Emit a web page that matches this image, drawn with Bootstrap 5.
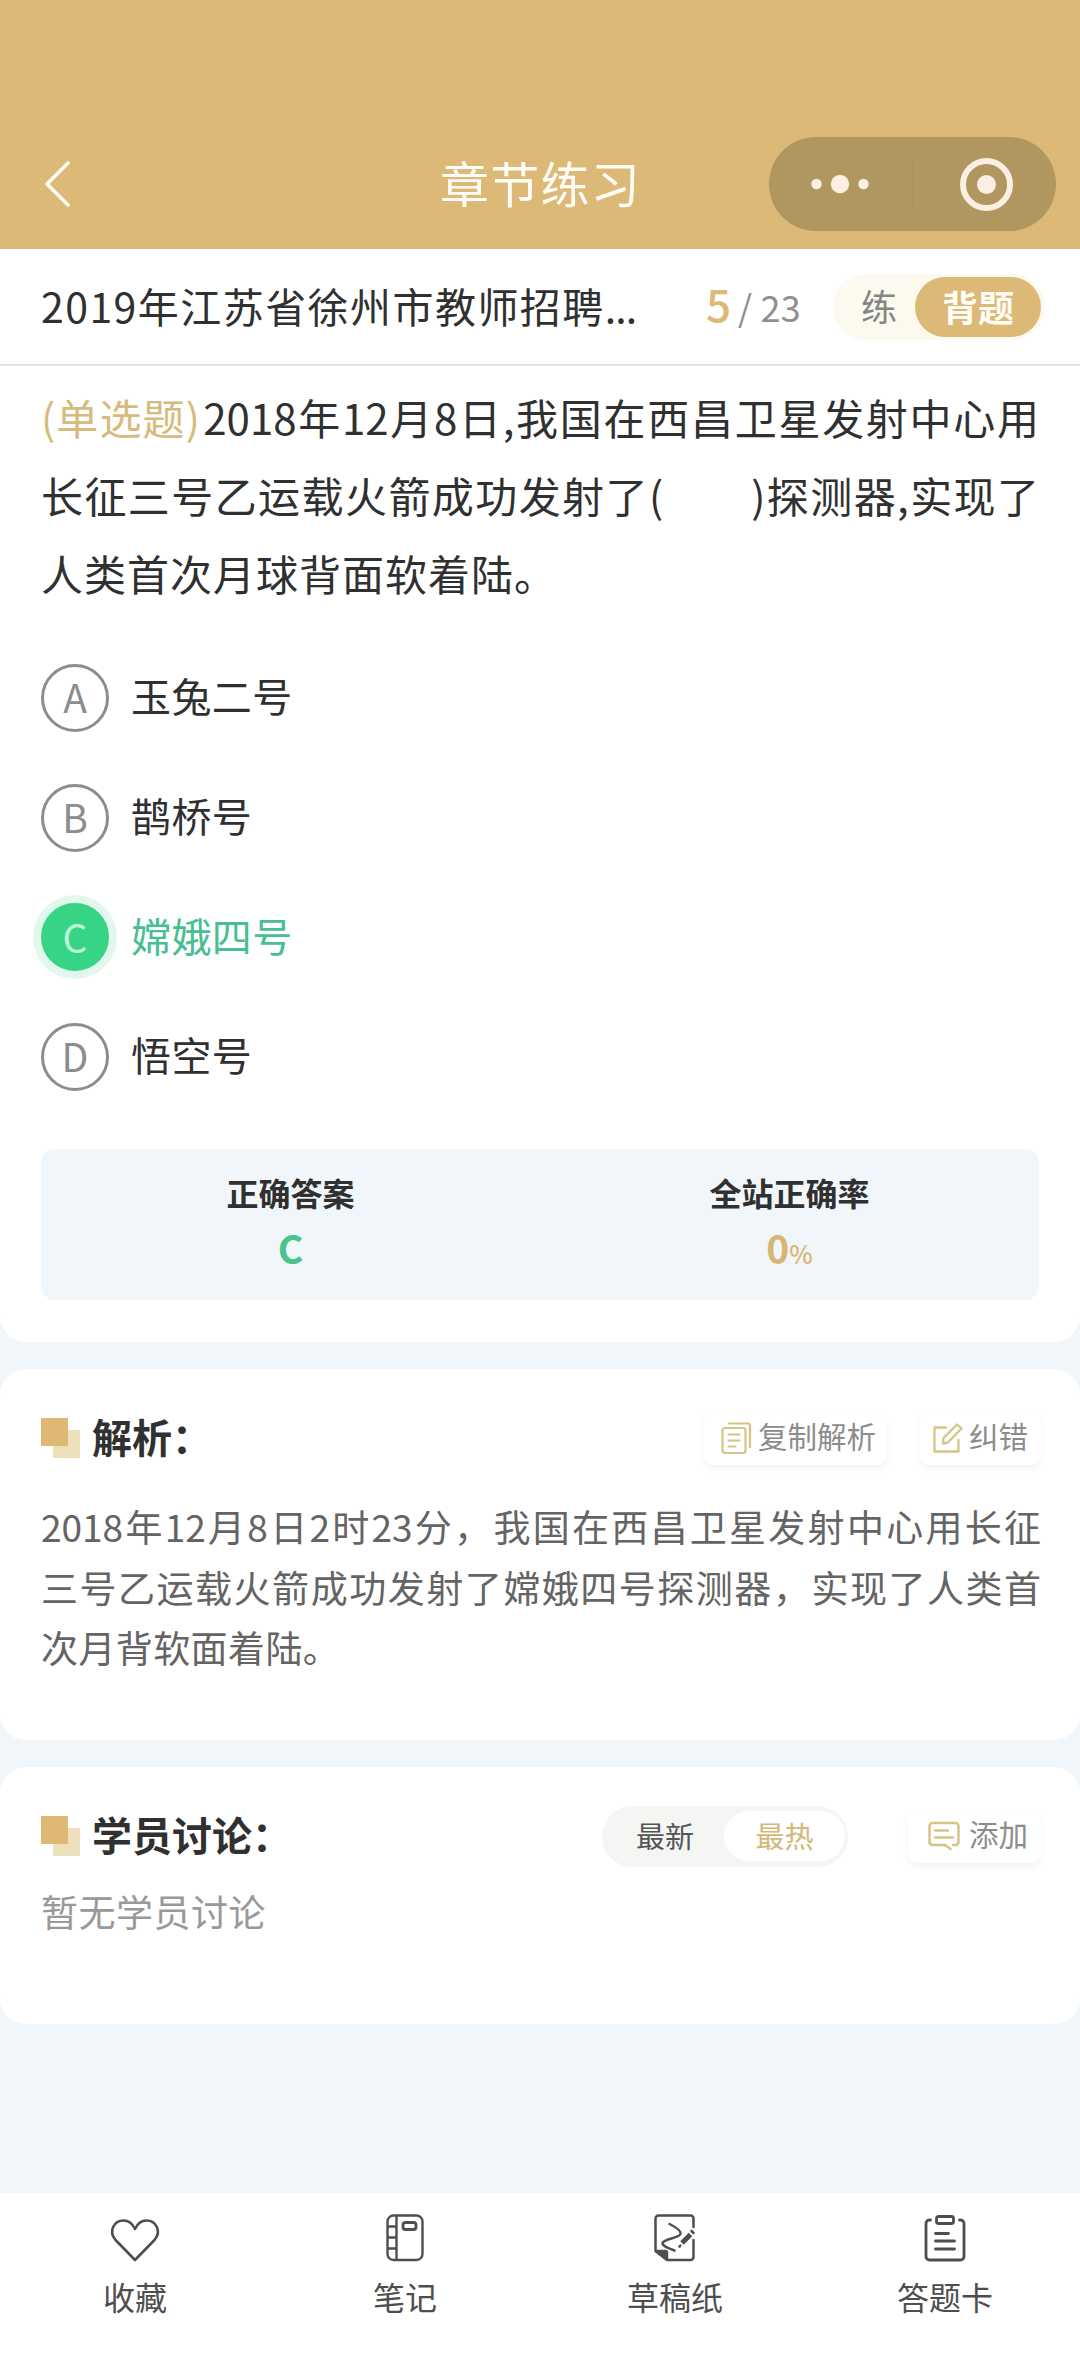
<!DOCTYPE html>
<html lang="zh-CN">
<head>
<meta charset="utf-8">
<meta name="viewport" content="width=device-width, initial-scale=1">
<title>章节练习</title>
<link href="https://cdn.jsdelivr.net/npm/bootstrap@5.3.0/dist/css/bootstrap.min.css" rel="stylesheet">
<style>
:root{--gold:#dcb977;--ink:#303030}
body{font-family:"Noto Sans CJK SC",sans-serif;background:#f0f6f9;color:var(--ink);width:1080px;height:2376px;overflow:hidden;line-height:1.5}
svg{display:block;flex:none}
.topbar{height:249px;background:var(--gold);padding:119px 24px 0 41px}
.topbar .inner{height:130px}
.page-title{font-size:49px;letter-spacing:1.2px;line-height:1;color:#fffdf8;padding:0 16px 5px 0}
.side{width:287px}
.capsule{width:287px;height:94px;border-radius:47px;background:#b0965f}
.subbar{height:117px;border-bottom:2px solid #e3e4e6;padding:0 35px 0 41px}
.paper-name{font-size:41px;letter-spacing:1.45px;width:600px;line-height:60px;padding-bottom:3px}
.paper-name .dots{letter-spacing:-.9px}
.now{font-size:44px;font-weight:500;color:var(--gold);line-height:60px}
.total{font-size:36px;color:#8f8f8f;letter-spacing:.3px}
.count{padding:0 0 7px 27px}
.mode{width:212px;height:66px;border-radius:33px;background:#fcf9ef;font-size:36px;line-height:1}
.mode .off{color:#858585;padding:0 0 3px 28px}
.mode .on{width:126px;height:60px;border-radius:30px;background:var(--gold);color:#fffdf6;font-weight:700;margin-right:4px;padding-bottom:2px}
.question{height:976px;border-radius:0 0 26px 26px;padding:12px 41px 0 41px}
.stem{font-size:42px;line-height:78px}
.stem div{height:78px;white-space:nowrap}
.just{text-align:justify;text-align-last:justify}
.opts{padding-top:26px}
.opt{height:119.7px;font-size:40px;letter-spacing:.4px;gap:22px}
.opt .txt{padding-bottom:5px}
.ring{width:68px;height:68px;border:3px solid #8d8d8f;border-radius:50%;color:#8d8d90;font-size:39px;line-height:1;letter-spacing:0;padding-bottom:2px}
.opt.right{color:#48be91}
.opt.right .ring{background:#38d485;border-color:#38d485;color:#b9f7d5;box-shadow:0 0 0 8px #e3f8ed}
.result{height:151px;border-radius:14px;background:#f0f6f9;margin-top:32px;padding-top:19px}
.result .cap{font-size:32px;font-weight:700;line-height:48px}
.result .val{font-size:39px;font-weight:700;line-height:62px}
.result small{font-size:25px;font-weight:500}
.panel{border-radius:26px;margin-top:27px;padding:0 39px 0 41px}
.explain{height:371px;padding-top:34px}
.discuss{height:257px;padding-top:34px}
.head{height:70px}
.head h2{font-size:40px;font-weight:700;line-height:60px;margin:0 0 4px 12px}
.tool{height:54px;border-radius:10px;background:#fff;color:#8c8c8c;font-size:29.5px;box-shadow:0 4px 7px rgba(0,0,0,.05);line-height:1}
.tool span{padding-bottom:5px}
.explain p{font-size:37px;line-height:60.5px;color:#646464;margin:0}
.sorter{width:246px;height:61px;border-radius:31px;background:#f5f5f4;font-size:29px;padding-right:3px;color:#555;line-height:1}
.sorter span{padding-bottom:2px}
.sorter .on{width:121px;height:50px;border-radius:25px;background:#fff;color:#d3b876}
.none{font-size:37px;letter-spacing:.5px;color:#999;line-height:60px}
.tabs{height:183px;margin-top:169px;padding-top:15px;color:#4e4e4e;font-size:32px}
.tabs span{line-height:48px;margin-top:4px}
</style>
<script src="https://cdn.jsdelivr.net/npm/bootstrap@5.3.0/dist/js/bootstrap.bundle.min.js"></script>
</head>
<body>
<header class="topbar">
  <div class="inner d-flex align-items-center justify-content-between">
    <div class="side"><svg width="32" height="50" viewBox="0 0 32 50"><path d="M27 4 6 25l21 21" fill="none" stroke="#fffdf8" stroke-width="3.6" stroke-linecap="round" stroke-linejoin="round"/></svg></div>
    <div class="page-title">章节练习</div>
    <svg class="capsule" viewBox="0 0 287 94"><path d="M144 20v54" stroke="#a98f5b" stroke-opacity=".5" stroke-width="1.5"/><g fill="#fbeee3"><circle cx="47.500" cy="47" r="5.200"/><circle cx="71" cy="47" r="9.200"/><circle cx="94.500" cy="47" r="5.200"/><circle cx="217.500" cy="47.500" r="9.500"/></g><circle cx="217.500" cy="47.500" r="23.500" fill="none" stroke="#fbeee3" stroke-width="6"/></svg>
  </div>
</header>
<div class="subbar bg-white d-flex align-items-center">
  <div class="paper-name text-nowrap">2019年江苏省徐州市教师招聘<span class="dots">...</span></div>
  <div class="count d-flex align-items-baseline me-auto" style="margin-left:38px"><span class="now">5</span><span class="total" style="margin-left:7px">/</span><span class="total ms-2">23</span></div>
  <div class="mode d-flex align-items-center justify-content-between"><span class="off">练</span><span class="on d-flex align-items-center justify-content-center">背题</span></div>
</div>
<main>
  <section class="question bg-white">
    <div class="stem">
      <div class="just"><span style="color:#d6bb7c;letter-spacing:-.6px">(单选题)</span><span class="ms-1">2018年12月8日,我国在西昌卫星发射中心用</span></div>
      <div class="just">长征三号乙运载火箭成功发射了(<span class="d-inline-block" style="width:88px"></span>)探测器,实现了</div>
      <div style="letter-spacing:1px">人类首次月球背面软着陆。</div>
    </div>
    <div class="opts">
      <div class="opt d-flex align-items-center"><span class="ring d-flex align-items-center justify-content-center">A</span><span class="txt">玉兔二号</span></div>
      <div class="opt d-flex align-items-center"><span class="ring d-flex align-items-center justify-content-center">B</span><span class="txt">鹊桥号</span></div>
      <div class="opt right d-flex align-items-center"><span class="ring d-flex align-items-center justify-content-center">C</span><span class="txt">嫦娥四号</span></div>
      <div class="opt d-flex align-items-center"><span class="ring d-flex align-items-center justify-content-center">D</span><span class="txt">悟空号</span></div>
    </div>
    <div class="result row g-0 text-center">
      <div class="col-6"><div class="cap">正确答案</div><div class="val" style="color:#48c48c">C</div></div>
      <div class="col-6"><div class="cap">全站正确率</div><div class="val" style="color:#d8b571">0<small>%</small></div></div>
    </div>
  </section>
  <section class="panel explain bg-white">
    <div class="head d-flex align-items-center">
      <svg width="39" height="40" viewBox="0 0 39 40"><path fill="#eddfba" d="M12 12h27v28H12z"/><path fill="#dfb873" d="M0 0h27v28H0z"/></svg>
      <h2>解析：</h2>
      <div class="tool ms-auto d-flex align-items-center" style="padding:0 11px 0 17px"><svg width="31" height="32" viewBox="0 0 31 32" fill="none" stroke="#d8c386" stroke-width="2.200" stroke-linecap="round" stroke-linejoin="round"><path d="M8 1.500h19a2 2 0 0 1 2 2V25"/><rect x="1.500" y="6" width="23" height="25" rx="2.500"/><path d="M7.500 12.500h11M7.500 18.500h11M7.500 24.500h7"/></svg><span style="margin-left:6px">复制解析</span></div>
      <div class="tool d-flex align-items-center" style="margin-left:33px;padding:0 13px"><svg width="30" height="30" viewBox="0 0 30 30" fill="none" stroke="#d8c386" stroke-width="2.300" stroke-linecap="round" stroke-linejoin="round"><path d="M13 4.500H1.500v24h24V17"/><path d="m24 1.500 4.500 4-13.500 14-5 1 .5-5.500z"/></svg><span style="margin-left:6px">纠错</span></div>
    </div>
    <p style="padding-top:23px"><span class="just d-block">2018年12月8日2时23分，我国在西昌卫星发射中心用长征</span><span class="just d-block">三号乙运载火箭成功发射了嫦娥四号探测器，实现了人类首</span><span class="d-block" style="letter-spacing:.4px">次月背软面着陆。</span></p>
  </section>
  <section class="panel discuss bg-white">
    <div class="head d-flex align-items-center">
      <svg width="39" height="40" viewBox="0 0 39 40"><path fill="#eddfba" d="M12 12h27v28H12z"/><path fill="#dfb873" d="M0 0h27v28H0z"/></svg>
      <h2>学员讨论：</h2>
      <div class="sorter ms-auto d-flex align-items-center justify-content-between"><span style="padding-left:34px">最新</span><span class="on d-flex align-items-center justify-content-center">最热</span></div>
      <div class="tool d-flex align-items-center" style="margin-left:60px;padding:0 13px 0 20px"><svg width="32" height="30" viewBox="0 0 32 30" fill="none" stroke="#d8c386" stroke-width="2.500" stroke-linecap="round" stroke-linejoin="round"><path d="M17 24H4.500a3 3 0 0 1-3-3V5a3 3 0 0 1 3-3h23a3 3 0 0 1 3 3v16a3 3 0 0 1-3 3H25"/><path d="m17 24 5.500 4M7 9.500h13M7 16.500h18"/></svg><span style="margin-left:9px">添加</span></div>
    </div>
    <div class="none" style="padding-top:10px">暂无学员讨论</div>
  </section>
</main>
<nav class="tabs bg-white row g-0 text-center">
  <div class="col-3 d-flex flex-column align-items-center"><svg width="60" height="60" viewBox="0 0 60 60" fill="none" stroke="#4e4e4e" stroke-width="2.600" stroke-linejoin="round"><path d="M30 52 10.500 32C3 23.500 9 12.500 18.500 12.500c5 0 9 3 11.500 8.500 2.500-5.500 6.500-8.500 11.500-8.500C51 12.500 57 23.500 49.500 32z"/></svg><span>收藏</span></div>
  <div class="col-3 d-flex flex-column align-items-center"><svg width="60" height="60" viewBox="0 0 60 60" fill="none" stroke="#4e4e4e" stroke-width="2.400"><rect x="12.500" y="7.500" width="35" height="44.500" rx="6"/><path d="M21.500 7.500v44.500M12.500 18.500h9M12.500 29.500h9M12.500 40.500h9"/><rect x="28" y="14.500" width="13" height="7" rx="2.500" stroke-width="2.800"/></svg><span>笔记</span></div>
  <div class="col-3 d-flex flex-column align-items-center"><svg width="60" height="60" viewBox="0 0 60 60" fill="none" stroke="#4e4e4e" stroke-width="2.500" stroke-linejoin="round" stroke-linecap="round"><path d="M48.500 19V10.500a3 3 0 0 0-3-3h-32a3 3 0 0 0-3 3V43l11.500 9h23.500a3 3 0 0 0 3-3V32"/><path d="M11 43h9.500q1.500 0 1.500 2v6.500z" fill="#4e4e4e"/><path d="M24.500 16c8 4 12 7 11 10-1 4-17 5-18 9 0 3 5 5 12 7.500"/><path d="m37 35 8.500-8.500" stroke-width="5" stroke-linecap="butt"/><path d="m34.500 38.500.8-.8M46.500 23l2 2" stroke-width="2.500"/></svg><span>草稿纸</span></div>
  <div class="col-3 d-flex flex-column align-items-center"><svg width="60" height="60" viewBox="0 0 60 60" fill="none" stroke="#4e4e4e" stroke-width="2.800" stroke-linecap="round"><path d="M15.500 12h-1a3.500 3.500 0 0 0-3.500 3.500v33a3.500 3.500 0 0 0 3.500 3.500h31a3.500 3.500 0 0 0 3.500-3.500v-33a3.500 3.500 0 0 0-3.500-3.500h-1"/><rect x="21.500" y="8.500" width="17" height="7" rx="2"/><path d="M20.500 25.500h13M20.500 33h19M20.500 41h19"/></svg><span>答题卡</span></div>
</nav>
</body>
</html>
